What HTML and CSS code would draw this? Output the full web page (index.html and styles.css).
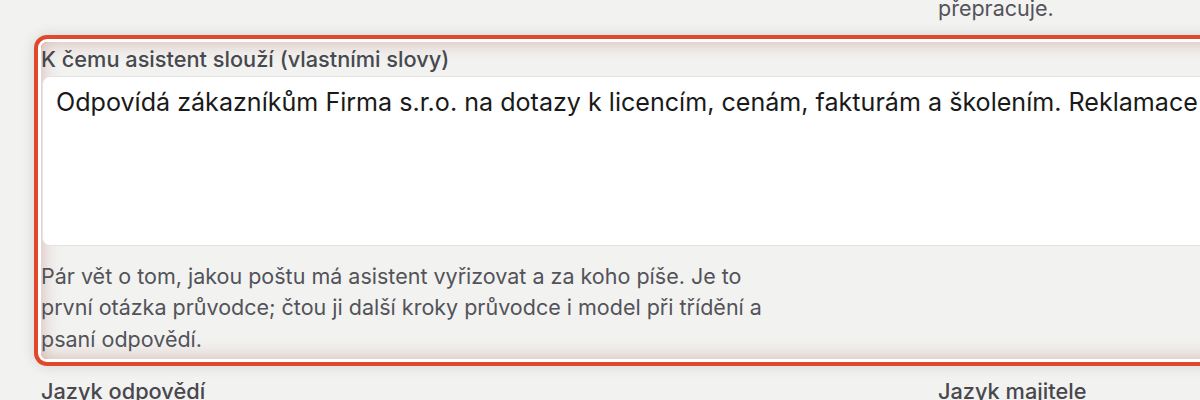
FILE: index.html
```html
<!DOCTYPE html>
<html lang="cs">
<head>
<meta charset="utf-8">
<title>Nastavení asistenta</title>
<link rel="stylesheet" href="styles.css">
</head>
<body>
<div class="form">
  <div class="cell"></div>
  <div class="cell">
    <p class="help">přepracuje.</p>
  </div>

  <div class="field field--highlight">
    <label class="label" for="purpose">K čemu asistent slouží (vlastními slovy)</label>
    <textarea id="purpose" class="textarea">Odpovídá zákazníkům Firma s.r.o. na dotazy k licencím, cenám, fakturám a školením. Reklamace předává vedení.</textarea>
    <p class="help help--narrow">Pár vět o tom, jakou poštu má asistent vyřizovat a za koho píše. Je to první otázka průvodce; čtou ji další kroky průvodce i model při třídění a psaní odpovědí.</p>
  </div>

  <div class="cell">
    <div class="label">Jazyk odpovědí</div>
  </div>
  <div class="cell">
    <div class="label">Jazyk majitele</div>
  </div>
</div>
</body>
</html>
```

FILE: styles.css
```css
html, body {
  margin: 0;
  padding: 0;
  background: #f2f2f0;
  overflow: hidden;
  height: 400px;
}

body {
  font-family: Inter, "Noto Sans", "Liberation Sans", sans-serif;
  color: #1c1c1e;
}

.form {
  display: grid;
  grid-template-columns: 861px 861px;
  column-gap: 36px;
  row-gap: 17.5px;
  padding-left: 41px;
  width: max-content;
  margin-top: -7px;
}

.cell {
  min-width: 0;
}

.help {
  margin: 0;
  font-size: 21.5px;
  line-height: 31.5px;
  color: #53535a;
}

.help--narrow {
  max-width: 745px;
  margin-top: 14.5px;
}

.label {
  display: block;
  font-size: 21.75px;
  font-weight: 500;
  line-height: 28px;
  color: #48484e;
}

.field {
  grid-column: 1 / -1;
  display: flex;
  flex-direction: column;
}

.field--highlight {
  padding: 3px 0 4px;
  border-radius: 6px;
  box-shadow:
    inset 0 0 18px rgba(150, 60, 45, 0.34),
    0 0 0 3px #ffffff,
    0 0 0 7px #e0482b,
    0 0 14px 7px rgba(0, 0, 0, 0.13);
}

.field .label {
  margin-bottom: 3px;
}

.textarea {
  box-sizing: border-box;
  display: block;
  width: calc(100% - 1px);
  margin-left: 1px;
  height: 170px;
  padding: 7px 13px;
  border: 1px solid #e3e3e1;
  border-radius: 8px;
  background: #ffffff;
  font-family: Inter, "Noto Sans", "Liberation Sans", sans-serif;
  font-size: 25.1px;
  line-height: 36px;
  color: #1a1a1a;
  resize: none;
  outline: none;
}
```
